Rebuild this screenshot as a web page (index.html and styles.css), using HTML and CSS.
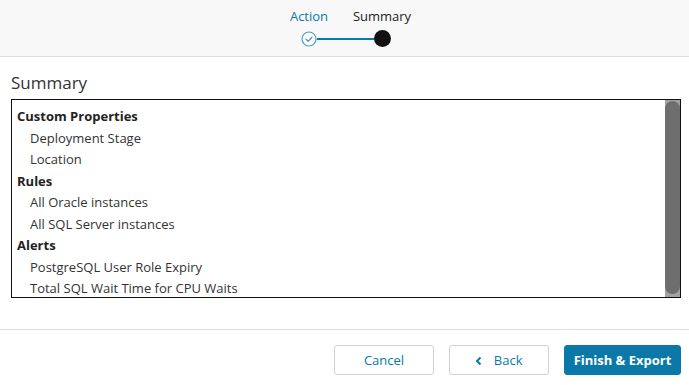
FILE: index.html
```html
<!DOCTYPE html>
<html lang="en">
<head>
  <meta charset="UTF-8" />
  <title>Export Summary</title>
  <link rel="stylesheet" href="styles.css">
</head>
<body>
  <header class="wizard-head">
    <div class="steps">
      <div class="step-labels">
        <span class="step-label done">Action</span>
        <span class="step-label">Summary</span>
      </div>
      <div class="step-track">
        <span class="dot dot-done">
          <svg width="16" height="16" viewBox="0 0 16 16">
            <circle cx="8" cy="8" r="7" fill="#fff" stroke="#4b9bc0" stroke-width="1.2"/>
            <path d="M5 8.2 L7.2 10.2 L11 6.2" fill="none" stroke="#4b9bc0" stroke-width="1.3" stroke-linecap="round" stroke-linejoin="round"/>
          </svg>
        </span>
        <span class="line"></span>
        <span class="dot dot-current"></span>
      </div>
    </div>
  </header>

  <main class="content">
    <h2 class="title">Summary</h2>
    <div class="summary-box">
      <div class="summary-list">
        <div class="group">Custom Properties</div>
        <div class="item">Deployment Stage</div>
        <div class="item">Location</div>
        <div class="group">Rules</div>
        <div class="item">All Oracle instances</div>
        <div class="item">All SQL Server instances</div>
        <div class="group">Alerts</div>
        <div class="item">PostgreSQL User Role Expiry</div>
        <div class="item">Total SQL Wait Time for CPU Waits</div>
      </div>
      <div class="scrollbar"><div class="thumb"></div></div>
    </div>
  </main>

  <footer class="actions">
    <button class="btn">Cancel</button>
    <button class="btn">
      <svg class="chev" width="8" height="10" viewBox="0 0 8 10">
        <path d="M5.5 1.5 L2 5 L5.5 8.5" fill="none" stroke="#0a79a8" stroke-width="2"/>
      </svg>
      Back
    </button>
    <button class="btn primary">Finish &amp; Export</button>
  </footer>
</body>
</html>
```

FILE: styles.css
```css
* {
  box-sizing: border-box;
}
body {
  margin: 0;
  font-family: 'Open Sans', sans-serif;
  color: #333;
  background: #fff;
}
.wizard-head {
  height: 57px;
  background: #f8f8f8;
  border-bottom: 1px solid #dcdcdc;
  display: flex;
  justify-content: center;
  padding-top: 6px;
}
.steps {
  display: flex;
  flex-direction: column;
  align-items: center;
  margin-left: 2px;
}
.step-labels {
  display: flex;
}
.step-label {
  width: 73px;
  text-align: center;
  font-size: 13px;
  line-height: 20px;
  color: #222;
}
.step-label.done {
  color: #0a79a8;
}
.step-track {
  display: flex;
  align-items: center;
  margin-top: 4px;
}
.dot {
  width: 16px;
  height: 16px;
  display: block;
}
.dot svg {
  display: block;
}
.dot-current {
  width: 17px;
  height: 17px;
  border-radius: 50%;
  background: #111;
}
.line {
  width: 57px;
  height: 2px;
  background: #0a79a8;
}
.content {
  padding: 14px 8px 0 11px;
}
.title {
  margin: 0 0 4px;
  font-size: 17px;
  font-weight: 400;
  line-height: 24px;
  color: #333;
}
.summary-box {
  height: 199px;
  border: 1px solid #111;
  display: flex;
}
.summary-list {
  flex: 1;
  overflow: hidden;
  padding: 6px 0 0 5px;
}
.scrollbar {
  width: 15px;
  background: #a2a2a2;
  padding: 1px 0 3px;
}
.thumb {
  height: 100%;
  background: #6e6e6e;
  border-radius: 8px;
}
.group, .item {
  font-size: 13px;
  line-height: 21.5px;
  white-space: nowrap;
}
.group {
  font-weight: 700;
  color: #222;
}
.item {
  padding-left: 13px;
  color: #333;
}
.actions {
  margin-top: 31px;
  border-top: 1px solid #dcdcdc;
  display: flex;
  justify-content: flex-end;
  gap: 15px;
  padding: 15px 8px 0 0;
}
.btn {
  height: 30px;
  width: 100px;
  border: 1px solid #d0d0d0;
  border-radius: 3px;
  background: #fff;
  color: #0a79a8;
  font-family: 'Open Sans', sans-serif;
  font-size: 13px;
  cursor: pointer;
}
.chev {
  margin-right: 7px;
  vertical-align: -1px;
}
.btn.primary {
  width: 117px;
  background: #0a79a8;
  border-color: #0a79a8;
  color: #fff;
  font-weight: 700;
}
```
